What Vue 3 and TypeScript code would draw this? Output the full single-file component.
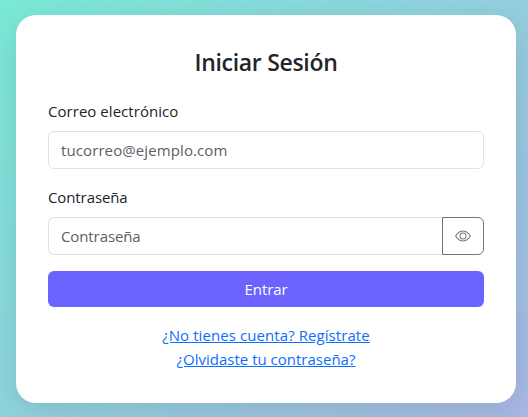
<script setup lang="ts">
import { ref } from 'vue'

const email = ref('')
const password = ref('')
const visible = ref(false)
</script>

<template>
  <main class="page">
    <form class="card" @submit.prevent>
      <h1 class="title">Iniciar Sesión</h1>
      <label class="label" for="email">Correo electrónico</label>
      <input id="email" v-model="email" class="input email" type="email" placeholder="tucorreo@ejemplo.com" />
      <label class="label" for="password">Contraseña</label>
      <div class="group">
        <input id="password" v-model="password" class="input secret" :type="visible ? 'text' : 'password'" placeholder="Contraseña" />
        <button class="toggle" type="button" @click="visible = !visible">
          <svg width="16" height="16" viewBox="0 0 16 16" fill="currentColor">
            <path d="M16 8s-3-5.5-8-5.5S0 8 0 8s3 5.5 8 5.5S16 8 16 8M1.173 8a13 13 0 0 1 1.66-2.043C4.12 4.668 5.88 3.5 8 3.5s3.879 1.168 5.168 2.457A13 13 0 0 1 14.828 8q-.086.13-.195.288c-.335.48-.83 1.12-1.465 1.755C11.879 11.332 10.119 12.5 8 12.5s-3.879-1.168-5.168-2.457A13 13 0 0 1 1.172 8z" />
            <path d="M8 5.5a2.5 2.5 0 1 0 0 5 2.5 2.5 0 0 0 0-5M4.500 8a3.500 3.500 0 1 1 7 0 3.500 3.500 0 0 1-7 0" />
          </svg>
        </button>
      </div>
      <button class="submit" type="submit">Entrar</button>
      <nav class="links">
        <a class="register" href="#">¿No tienes cuenta? Regístrate</a>
        <a class="forgot" href="#">¿Olvidaste tu contraseña?</a>
      </nav>
    </form>
  </main>
</template>

<style>
body {
  margin: 0;
  overflow: hidden;
}
</style>

<style scoped>
* {
  box-sizing: border-box;
}

.page {
  height: 417px;
  padding: 15px 12px 14px 16px;
  background: linear-gradient(135deg, #79e9d7, #a8b8e4);
  font-family: "Open Sans", "Noto Sans", sans-serif;
  font-size: 15px;
  line-height: 24px;
  color: #212529;
}

.card {
  display: flex;
  flex-direction: column;
  height: 388px;
  padding: 33px 32px 30px;
  border-radius: 20px;
  background: #fff;
  box-shadow: 0 8px 30px rgba(0, 0, 0, 0.1);
}

.card > * {
  flex-shrink: 0;
}

.title {
  margin: 0 0 22px;
  font-size: 23px;
  font-weight: 600;
  line-height: 29px;
  letter-spacing: -0.3px;
  text-align: center;
}

.label {
  margin-bottom: 8px;
  letter-spacing: 0.04px;
}

.label[for="password"] {
  letter-spacing: -0.1px;
}

.input {
  width: 100%;
  height: 38px;
  padding: 6px 12px;
  border: 1px solid #dee2e6;
  border-radius: 6px;
  background: #fff;
  color: #212529;
  font: inherit;
  outline: none;
}

.input::placeholder {
  color: #5b6066;
  opacity: 1;
}

.email {
  margin-bottom: 16px;
  letter-spacing: 0.1px;
}

.group {
  display: flex;
  margin-bottom: 16px;
}

.secret {
  flex: 1;
  min-width: 0;
  border-right: 0;
  border-radius: 6px 0 0 6px;
  letter-spacing: -0.1px;
}

.toggle {
  display: flex;
  align-items: center;
  justify-content: center;
  width: 42px;
  height: 38px;
  padding: 0 1px 0 0;
  border: 1px solid #6c757d;
  border-radius: 0 6px 6px 0;
  background: #fff;
  color: #6c757d;
}

.submit {
  height: 36px;
  margin-bottom: 16px;
  padding: 0 0 1px;
  border: 0;
  border-radius: 6px;
  background: #6c63ff;
  color: #fff;
  font: inherit;
  letter-spacing: -0.1px;
}

.links {
  display: flex;
  flex-direction: column;
  align-items: center;
}

.links a {
  color: #0d6efd;
  text-decoration: underline;
}

.links .register {
  letter-spacing: 0.08px;
}
</style>
